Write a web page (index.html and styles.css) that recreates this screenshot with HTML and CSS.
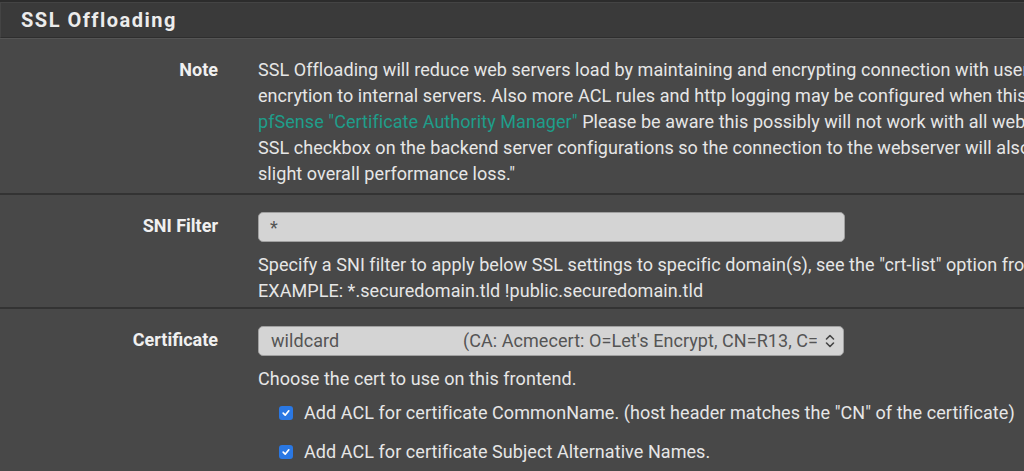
FILE: index.html
```html
<!DOCTYPE html>
<html>
<head>
<meta charset="utf-8">
<link rel="stylesheet" href="styles.css">
</head>
<body>
<div class="topstrip"></div>
<div class="panel-heading"><h2 class="panel-title">SSL Offloading</h2></div>
<div class="panel-body">
  <div class="form-group first">
    <div class="label">Note</div>
    <div class="content">
      <span class="line">SSL Offloading will reduce web servers load by maintaining and encrypting connection with users on internet while sending and retrieving data without</span>
      <span class="line">encrytion to internal servers. Also more ACL rules and http logging may be configured when this option is used. Certificates can be imported into the</span>
      <span class="line"><a class="link" href="#">pfSense "Certificate Authority Manager"</a> Please be aware this possibly will not work with all web applications. Some applications will require setting the</span>
      <span class="line">SSL checkbox on the backend server configurations so the connection to the webserver will also be a encrypted connection, in that case there will be a</span>
      <span class="line">slight overall performance loss."</span>
    </div>
  </div>
  <div class="form-group second">
    <div class="label label-field">SNI Filter</div>
    <div class="content">
      <div class="input">*</div>
      <div class="help">
        <span class="line">Specify a SNI filter to apply below SSL settings to specific domain(s), see the "crt-list" option from haproxy for details.</span>
        <span class="line">EXAMPLE: *.securedomain.tld !public.securedomain.tld</span>
      </div>
    </div>
  </div>
  <div class="form-group last">
    <div class="label label-field">Certificate</div>
    <div class="content">
      <div class="select">
        <span class="sel-name">wildcard</span>
        <span class="sel-ca">(CA: Acmecert: O=Let's Encrypt, CN=R13, C=US)</span>
        <svg class="chev" width="10" height="16" viewBox="0 0 10 16"><path d="M1.5 6 L5 2.5 L8.5 6 M1.5 10 L5 13.5 L8.5 10" fill="none" stroke="#444" stroke-width="1.6" stroke-linecap="round" stroke-linejoin="round"/></svg>
      </div>
      <div class="help"><span class="line">Choose the cert to use on this frontend.</span></div>
      <div class="check"><span class="box"><svg width="10" height="10" viewBox="0 0 10 10"><path d="M2.2 5.2 L4.2 7.2 L7.8 2.8" fill="none" stroke="#fff" stroke-width="1.7" stroke-linecap="round" stroke-linejoin="round"/></svg></span><span>Add ACL for certificate CommonName. (host header matches the "CN" of the certificate)</span></div>
      <div class="check"><span class="box"><svg width="10" height="10" viewBox="0 0 10 10"><path d="M2.2 5.2 L4.2 7.2 L7.8 2.8" fill="none" stroke="#fff" stroke-width="1.7" stroke-linecap="round" stroke-linejoin="round"/></svg></span><span>Add ACL for certificate Subject Alternative Names.</span></div>
    </div>
  </div>
</div>
</body>
</html>
```
FILE: styles.css
```css
html, body {
  margin: 0;
  padding: 0;
  background: #484848;
  overflow: hidden;
  width: 1024px;
  height: 471px;
}
body {
  font-family: Roboto, "Liberation Sans", sans-serif;
  color: #e6e6e6;
  font-size: 18px;
}
.topstrip {
  height: 2px;
  background: #2c2c2c;
}
.panel-heading {
  height: 34px;
  background: #3a3a3a;
  border: 1px solid #444;
  border-bottom: 1px solid #2e2e2e;
  border-right: none;
  display: flex;
  align-items: center;
  padding-left: 20px;
}
.panel-title {
  margin: 0;
  font-size: 20px;
  font-weight: 700;
  letter-spacing: 1.5px;
  color: #ececec;
}
.panel-body {
  border-top: 1px solid #555;
}
.form-group {
  display: flex;
  gap: 40px;
  border-bottom: 2px solid #333;
  padding: 17px 0 5px 0;
}
.form-group.first {
  padding-top: 18px;
  padding-bottom: 6px;
}
.form-group.second {
  padding-bottom: 3px;
}
.form-group.last {
  border-bottom: none;
}
.label {
  width: 218px;
  flex: none;
  text-align: right;
  font-weight: 700;
  line-height: 26px;
  color: #f0f0f0;
}
.label-field {
  padding-top: 1px;
}
.content {
  flex: 1;
  min-width: 0;
  line-height: 26px;
  letter-spacing: 0.06px;
}
.line {
  display: block;
  white-space: nowrap;
}
.link {
  color: #1f9d8a;
  text-decoration: none;
}
.input {
  width: 574px;
  height: 28px;
  border: 1px solid #a0a0a0;
  border-radius: 5px;
  background: #d4d4d4;
  color: #555;
  padding-left: 11px;
  line-height: 30px;
  font-size: 18px;
}
.help {
  margin-top: 10px;
}
.select {
  width: 584px;
  height: 28px;
  border: 1px solid #a0a0a0;
  border-radius: 5px;
  background: #d4d4d4;
  color: #555;
  display: flex;
  align-items: center;
  line-height: 28px;
}
.sel-name {
  width: 192px;
  flex: none;
  padding-left: 12px;
}
.sel-ca {
  flex: 1;
  min-width: 0;
  white-space: nowrap;
  overflow: hidden;
  margin-right: 8px;
}
.chev {
  flex: none;
  margin-right: 8px;
}
.check {
  display: flex;
  align-items: center;
  gap: 11px;
  padding-left: 21px;
  margin-top: 5px;
  height: 32px;
  white-space: nowrap;
}
.check + .check {
  margin-top: 7px;
}
.box {
  width: 14px;
  height: 14px;
  border-radius: 3px;
  background: #2a78e4;
  display: flex;
  align-items: center;
  justify-content: center;
  flex: none;
}
```
